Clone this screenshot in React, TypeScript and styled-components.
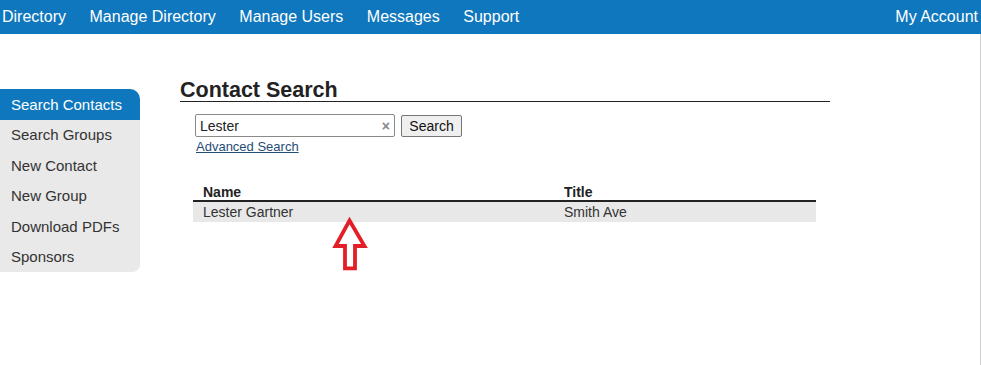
import React from "react";
import styled, { createGlobalStyle } from "styled-components";

const GlobalStyle = createGlobalStyle`
  html, body { margin: 0; padding: 0; background: #fff; }
  body { font-family: "Liberation Sans", Arial, sans-serif; }
  * { box-sizing: border-box; }
`;

const Page = styled.div`
  width: 981px;
  min-height: 365px;
`;

const TopNav = styled.nav`
  height: 34px;
  background: #0f77bd;
  display: flex;
  align-items: center;
  justify-content: space-between;
  padding: 0 3px 0 2px;
`;

const NavList = styled.div`
  display: flex;
  gap: 23.5px;
`;

const NavLink = styled.a`
  color: #fff;
  font-size: 16px;
  line-height: 20px;
  text-decoration: none;
  white-space: nowrap;
`;

const Body = styled.div`
  display: flex;
  align-items: flex-start;
  min-height: 331px;
  border-right: 1px solid #cfcfcf;
`;

const Sidebar = styled.ul`
  list-style: none;
  margin: 55px 0 0;
  padding: 0;
  width: 140px;
  flex: 0 0 140px;
  background: #e9e9e9;
  border-radius: 0 10px 8px 0;
  overflow: hidden;
`;

const SideItem = styled.li<{ $active?: boolean }>`
  height: 30.5px;
  display: flex;
  align-items: center;
  padding: 0 11px;
  font-size: 15px;
  color: ${(p) => (p.$active ? "#fff" : "#333")};
  background: ${(p) => (p.$active ? "#0f77bd" : "transparent")};
  white-space: nowrap;
`;

const Main = styled.main`
  position: relative;
  margin-left: 40px;
  width: 650px;
  padding-top: 45px;
`;

const Title = styled.h1`
  margin: 0;
  font-size: 21.5px;
  line-height: 22px;
  font-weight: bold;
  color: #222;
  padding-bottom: 0;
  border-bottom: 1px solid #222;
`;

const SearchForm = styled.form`
  display: flex;
  align-items: center;
  gap: 6px;
  margin: 12px 0 0 15px;
`;

const InputWrap = styled.div`
  position: relative;
  width: 200px;
  height: 23px;
  border: 1px solid #8a8a8a;
  border-radius: 2px;
  display: flex;
  align-items: center;
  padding: 0 4px;
`;

const InputText = styled.span`
  font-size: 14px;
  color: #222;
  flex: 1;
`;

const ClearMark = styled.span`
  font-size: 14px;
  font-weight: bold;
  color: #888;
  line-height: 1;
`;

const SearchButton = styled.button`
  height: 22px;
  width: 61px;
  padding: 0;
  font-family: "Liberation Sans", Arial, sans-serif;
  font-size: 14px;
  color: #111;
  background: #efefef;
  border: 1px solid #767676;
  border-radius: 2px;
`;

const AdvancedLink = styled.a`
  display: block;
  margin: 2px 0 0 16px;
  font-size: 13px;
  line-height: 16px;
  color: #1f4d78;
  text-decoration: underline;
`;

const Results = styled.table`
  margin: 27px 0 0 13px;
  width: 623px;
  border-collapse: collapse;
  font-size: 14px;
`;

const HeadCell = styled.th<{ $w?: number }>`
  text-align: left;
  font-weight: bold;
  color: #222;
  line-height: 16px;
  padding: 2px 10px 0;
  border-bottom: 2px solid #222;
  ${(p) => (p.$w ? `width: ${p.$w}px;` : "")}
`;

const Row = styled.tr`
  background: #e8e8e8;
`;

const Cell = styled.td`
  color: #333;
  line-height: 20px;
  padding: 0 10px;
`;

const ArrowMark = styled.svg`
  position: absolute;
  left: 150px;
  top: 182px;
`;

const navItems = ["Directory", "Manage Directory", "Manage Users", "Messages", "Support"];
const sideItems = ["Search Contacts", "Search Groups", "New Contact", "New Group", "Download PDFs", "Sponsors"];

export default function App() {
  return (
    <Page>
      <GlobalStyle />
      <TopNav>
        <NavList>
          {navItems.map((n) => (
            <NavLink key={n}>{n}</NavLink>
          ))}
        </NavList>
        <NavLink>My Account</NavLink>
      </TopNav>
      <Body>
        <Sidebar>
          {sideItems.map((s, i) => (
            <SideItem key={s} $active={i === 0}>
              {s}
            </SideItem>
          ))}
        </Sidebar>
        <Main>
          <Title>Contact Search</Title>
          <SearchForm onSubmit={(e) => e.preventDefault()}>
            <InputWrap>
              <InputText>Lester</InputText>
              <ClearMark>×</ClearMark>
            </InputWrap>
            <SearchButton type="button">Search</SearchButton>
          </SearchForm>
          <AdvancedLink>Advanced Search</AdvancedLink>
          <Results>
            <thead>
              <tr>
                <HeadCell $w={361}>Name</HeadCell>
                <HeadCell>Title</HeadCell>
              </tr>
            </thead>
            <tbody>
              <Row>
                <Cell>Lester Gartner</Cell>
                <Cell>Smith Ave</Cell>
              </Row>
            </tbody>
          </Results>
          <ArrowMark width="40" height="60" viewBox="0 0 40 60">
            <polygon
              points="19.5,4.5 34.5,30 25,30 25,52.3 15,52.3 15,30 5.5,30"
              fill="#fff"
              stroke="#e41e26"
              strokeWidth="3.8"
              strokeLinejoin="miter"
            />
          </ArrowMark>
        </Main>
      </Body>
    </Page>
  );
}
